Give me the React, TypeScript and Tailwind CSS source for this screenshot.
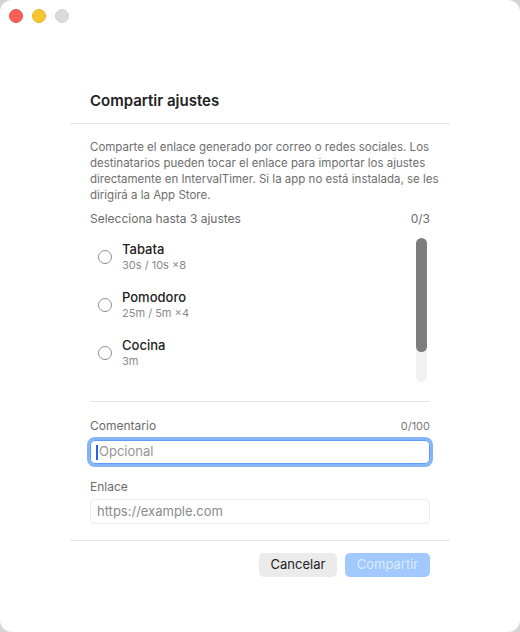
import React from 'react';

// Presets shown in the share sheet
const presets = [
  { name: 'Tabata', detail: '30s / 10s ×8' },
  { name: 'Pomodoro', detail: '25m / 5m ×4' },
  { name: 'Cocina', detail: '3m' },
];

const App = () => {
  return (
    <div className="w-[520px] h-[632px] bg-[#d4d4d4] font-['Inter',sans-serif]">
      <div className="w-full h-full bg-white rounded-[12px] flex flex-col overflow-hidden">
        {/* Title bar */}
        <div className="h-8 flex items-center gap-[9px] pl-[9px] shrink-0">
          <span className="w-[14px] h-[14px] rounded-full bg-[#fe5f57] border border-[#e9524b]" />
          <span className="w-[14px] h-[14px] rounded-full bg-[#f9c630] border border-[#e5b22a]" />
          <span className="w-[14px] h-[14px] rounded-full bg-[#dadada] border border-[#d0d0d0]" />
        </div>

        <div className="mx-[70px] mt-[59px] flex flex-col">
          {/* Header */}
          <div className="px-5 pb-3 border-b border-[#e6e6e6]">
            <h2 className="text-[15px] leading-5 font-semibold text-[#222]">Compartir ajustes</h2>
          </div>

          <div className="px-5 pt-[15px]">
            <p className="text-[11.5px] leading-4 text-[#6e6e6e] whitespace-nowrap">
              Comparte el enlace generado por correo o redes sociales. Los
              <br />
              destinatarios pueden tocar el enlace para importar los ajustes
              <br />
              directamente en IntervalTimer. Si la app no está instalada, se les
              <br />
              dirigirá a la App Store.
            </p>

            <div className="mt-2 flex justify-between text-[12px] leading-4 text-[#6b6b6b]">
              <span>Selecciona hasta 3 ajustes</span>
              <span>0/3</span>
            </div>

            {/* Preset list with scrollbar */}
            <div className="mt-[11px] h-[144px] flex">
              <div className="flex-1">
                {presets.map((p) => (
                  <div key={p.name} className="h-12 flex items-center pl-2 pb-[10px]">
                    <span className="w-[14px] h-[14px] rounded-full border border-[#8f8f8f] bg-white shrink-0" />
                    <div className="ml-[10px] flex flex-col">
                      <span className="text-[13px] leading-[17px] font-medium text-[#222]">{p.name}</span>
                      <span className="text-[11px] leading-[15px] text-[#8a8a8a]">{p.detail}</span>
                    </div>
                  </div>
                ))}
              </div>
              <div className="w-[11px] mr-[3px] h-full rounded-full bg-[#f1f1f1] flex flex-col">
                <div className="h-[114px] rounded-full bg-[#7d7d7d]" />
              </div>
            </div>

            <div className="mt-[19px] border-t border-[#e6e6e6]" />

            {/* Comment */}
            <div className="mt-4 flex justify-between items-end leading-4">
              <span className="text-[12px] text-[#6b6b6b]">Comentario</span>
              <span className="text-[11px] text-[#7a7a7a]">0/100</span>
            </div>
            <div className="mt-[6px] h-6 rounded-[5px] border border-[#5f9cf3] ring-[3px] ring-[#86b5f7] flex items-center px-[5px]">
              <span className="w-[2px] h-[15px] bg-[#2166e8] mr-px" />
              <span className="text-[13px] text-[#959595]">Opcional</span>
            </div>

            {/* Link */}
            <div className="mt-[15px] text-[12px] leading-4 text-[#6b6b6b]">Enlace</div>
            <div className="mt-[4px] h-[25px] rounded-[5px] border border-[#ececec] flex items-center px-[6px]">
              <span className="text-[13px] text-[#8a8a8a]">https://example.com</span>
            </div>
          </div>

          {/* Footer */}
          <div className="mt-4 border-t border-[#e6e6e6] px-5 pt-3 flex justify-end gap-2">
            <button className="w-[78px] h-6 rounded-[5px] bg-[#ebebeb] text-[13px] text-[#222]">Cancelar</button>
            <button className="w-[85px] h-6 rounded-[5px] bg-[#a2c9fd] text-[13px] text-[#dceafe]">Compartir</button>
          </div>
        </div>
      </div>
    </div>
  );
};

export default App;
